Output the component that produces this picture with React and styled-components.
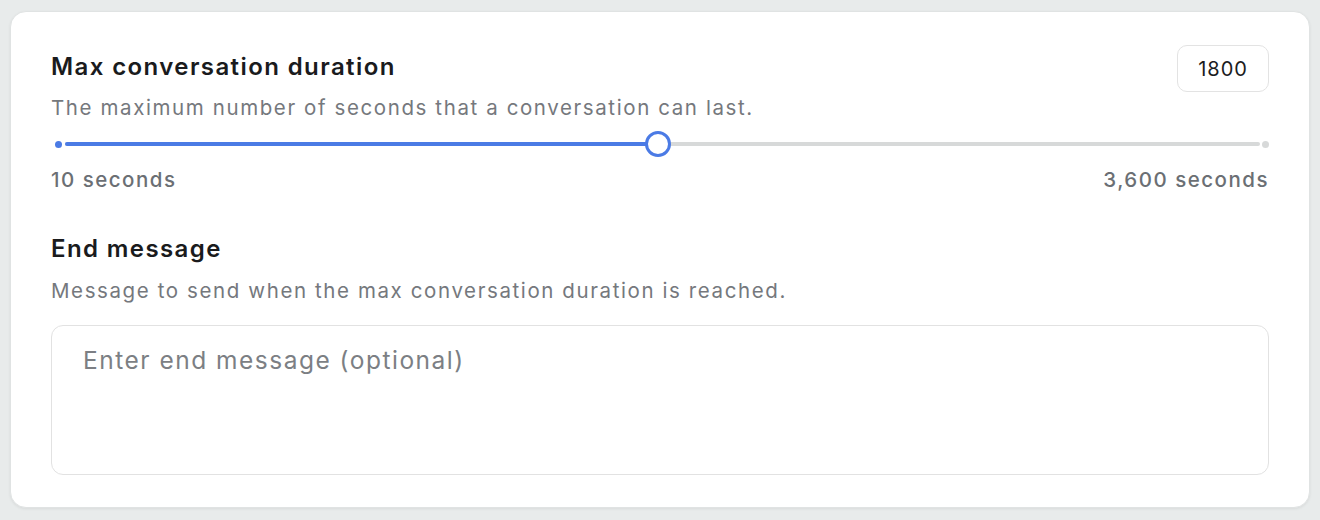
import React from "react";
import styled, { createGlobalStyle } from "styled-components";

const Global = createGlobalStyle`
  html, body { margin: 0; padding: 0; background: #e8ebeb; }
  body { font-family: Inter, "Noto Sans", sans-serif; -webkit-font-smoothing: antialiased; }
  * { box-sizing: border-box; }
`;

const Page = styled.div`
  padding: 11px 10px 12px 10px;
  height: 520px;
`;

const Card = styled.div`
  background: #fff;
  border-radius: 16px;
  border: 1px solid #e0e3e3;
  box-shadow: 0 1px 3px rgba(0, 0, 0, 0.07);
  padding: 33px 40px 32px 40px;
  display: flex;
  flex-direction: column;
`;

const Section = styled.section`
  display: flex;
  flex-direction: column;
  margin-top: ${p => p.$mt || 0}px;
`;

const HeaderRow = styled.div`
  display: flex;
  justify-content: space-between;
  align-items: flex-start;
`;

const TitleBlock = styled.div`
  display: flex;
  flex-direction: column;
  padding-top: ${p => p.$pt || 0}px;
`;

const Title = styled.h2`
  margin: 0;
  font-size: 24px;
  font-weight: 600;
  color: #1a1b1d;
  line-height: 32px;
  letter-spacing: 1.4px;
`;

const Desc = styled.p`
  margin: ${p => p.$mt || 0}px 0 0 0;
  font-size: 20.5px;
  color: #75787d;
  line-height: 26px;
  letter-spacing: 1.6px;
  white-space: nowrap;
`;

const NumberBox = styled.div`
  border: 1.5px solid #e3e3e3;
  border-radius: 10px;
  width: 92px;
  height: 47px;
  display: flex;
  align-items: center;
  justify-content: center;
  font-size: 20px;
  color: #1b1c1e;
  letter-spacing: 1px;
`;

const Slider = styled.div`
  position: relative;
  height: 24px;
  margin-top: 11px;
`;

const TrackLine = styled.div`
  position: absolute;
  top: 50%;
  left: 14px;
  right: 9px;
  height: 4px;
  margin-top: -2px;
  background: #d7d9d9;
  border-radius: 2px;
  overflow: hidden;
`;

const Fill = styled.div`
  height: 100%;
  background: #4b7be5;
`;

const EndDot = styled.span`
  position: absolute;
  top: 50%;
  width: 7px;
  height: 7px;
  margin-top: -3.5px;
  border-radius: 50%;
  background: ${p => p.$color};
  ${p => (p.$side === "left" ? "left: 4px;" : "right: 0px;")}
`;

const Thumb = styled.span`
  position: absolute;
  top: 50%;
  width: 26px;
  height: 26px;
  border-radius: 50%;
  background: #fff;
  border: 3.5px solid #4b7be5;
  transform: translate(-50%, -50%);
`;

const Labels = styled.div`
  display: flex;
  justify-content: space-between;
  margin-top: 12px;
  font-size: 20.5px;
  font-weight: 500;
  color: #6b6f74;
  line-height: 24px;
  letter-spacing: 1.5px;
`;

const TextArea = styled.textarea`
  margin-top: 21px;
  height: 150px;
  border: 1.5px solid #e2e2e2;
  border-radius: 12px;
  padding: 19px 31px;
  font-family: inherit;
  font-size: 24.5px;
  line-height: 30px;
  color: #1b1c1e;
  resize: none;
  outline: none;
  letter-spacing: 1.5px;
  &::placeholder { color: #7c7f84; }
`;

export default function App() {
  const min = 10, max = 3600, value = 1800;
  const pct = ((value - min) / (max - min)) * 100;
  return (
    <Page>
      <Global />
      <Card>
        <Section>
          <HeaderRow>
            <TitleBlock $pt={6}>
              <Title>Max conversation duration</Title>
              <Desc $mt={12}>The maximum number of seconds that a conversation can last.</Desc>
            </TitleBlock>
            <NumberBox>1800</NumberBox>
          </HeaderRow>
          <Slider>
            <TrackLine>
              <Fill style={{ width: `calc(${pct}% + ${(23 * pct) / 100 - 14}px)` }} />
            </TrackLine>
            <EndDot $side="left" $color="#4b7be5" />
            <EndDot $side="right" $color="#d7d9d9" />
            <Thumb style={{ left: `${pct}%` }} />
          </Slider>
          <Labels>
            <span>10 seconds</span>
            <span>3,600 seconds</span>
          </Labels>
        </Section>
        <Section $mt={41}>
          <Title>End message</Title>
          <Desc $mt={13}>Message to send when the max conversation duration is reached.</Desc>
          <TextArea placeholder="Enter end message (optional)" />
        </Section>
      </Card>
    </Page>
  );
}
